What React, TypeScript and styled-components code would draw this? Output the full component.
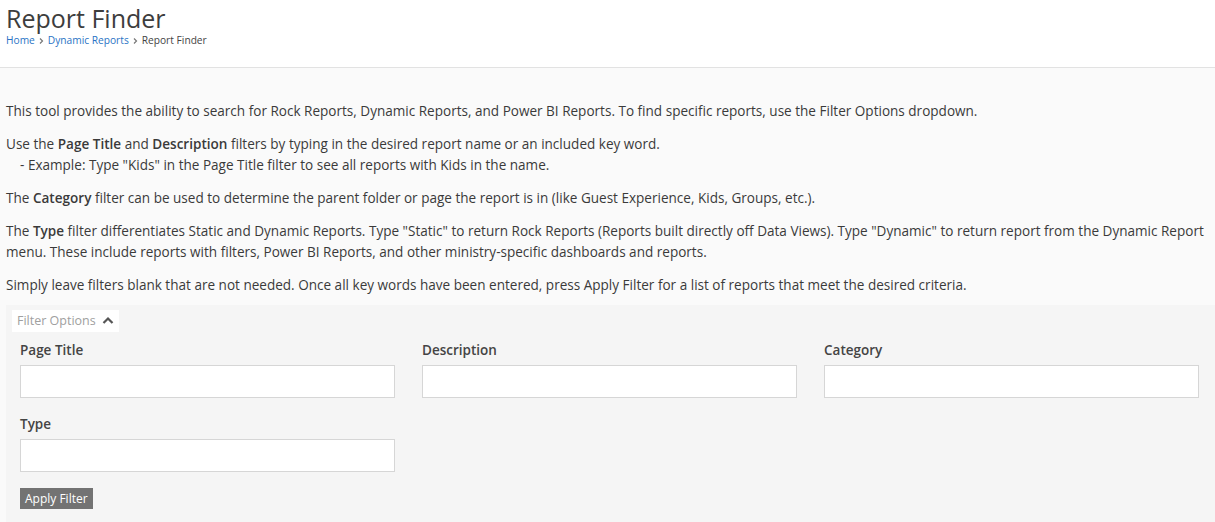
import styled, { createGlobalStyle } from 'styled-components';

const GlobalStyle = createGlobalStyle`
  html, body {
    margin: 0;
    padding: 0;
    background: #fafafa;
    font-family: "Open Sans", "Noto Sans", sans-serif;
    color: #3a3a3a;
  }
  * { box-sizing: border-box; }
`

const Header = styled.header`
  background: #fff;
  border-bottom: 1px solid #e2e2e2;
  height: 68px;
  padding: 3px 6px 0;
`

const Title = styled.h1`
  margin: 0;
  font-size: 25px;
  font-weight: 400;
  line-height: 30px;
  color: #3d3d3d;
`

const Crumbs = styled.nav`
  display: flex;
  align-items: center;
  gap: 3px;
  font-size: 10.2px;
  line-height: 15px;
`

const Crumb = styled.a<{ $active?: boolean }>`
  color: ${p => (p.$active ? '#444' : '#2a73c5')};
  text-decoration: none;
`

const Sep = styled.span`
  display: inline-flex;
  color: #777;
`

const Main = styled.main`
  padding: 33px 0 0 6px;
`

const Para = styled.p`
  margin: 0 0 12px;
  font-size: 13.55px;
  line-height: 21px;
  b { font-weight: 600; }
  &:last-of-type { margin-bottom: 9px; }
`

const Indent = styled.span`
  padding-left: 14px;
`

const Panel = styled.section`
  background: #f5f5f5;
  padding: 3px 16px 13px 6px;
`

const Toggle = styled.button`
  display: inline-flex;
  align-items: center;
  gap: 6px;
  background: #fff;
  border: none;
  font: inherit;
  font-size: 12.5px;
  color: #a0a0a0;
  height: 22px;
  padding: 0 5px;
  cursor: pointer;
`

const Form = styled.div`
  padding: 8px 0 0 8px;
`

const Grid = styled.div`
  display: grid;
  grid-template-columns: repeat(3, 375px);
  column-gap: 27px;
  row-gap: 16px;
`

const Field = styled.label`
  display: flex;
  flex-direction: column;
`

const Label = styled.span`
  font-size: 13.5px;
  font-weight: 600;
  color: #444;
  line-height: 20px;
  margin-bottom: 5px;
`

const Input = styled.input`
  height: 33px;
  border: 1px solid #d6d6d6;
  background: #fff;
  font: inherit;
`

const Button = styled.button`
  margin-top: 16px;
  background: #737373;
  color: #fff;
  border: none;
  font: inherit;
  font-size: 12px;
  height: 21px;
  padding: 0 5px;
  cursor: pointer;
`

const Up = styled.span`
  display: inline-flex;
  color: #555;
`

const fields = ['Page Title', 'Description', 'Category', 'Type'];

function Chevron() {
  return (
    <svg width="7" height="8" viewBox="0 0 7 8">
      <path d="M2 1.5 L4.5 4 L2 6.5" fill="none" stroke="currentColor" strokeWidth="1.2" />
    </svg>
  )
}

export default function App() {
  return (
    <>
      <GlobalStyle />
      <Header>
        <Title>Report Finder</Title>
        <Crumbs>
          <Crumb href="#">Home</Crumb>
          <Sep><Chevron /></Sep>
          <Crumb href="#">Dynamic Reports</Crumb>
          <Sep><Chevron /></Sep>
          <Crumb $active>Report Finder</Crumb>
        </Crumbs>
      </Header>
      <Main>
        <Para>
          This tool provides the ability to search for Rock Reports, Dynamic Reports, and Power BI Reports. To find specific reports, use the Filter Options dropdown.
        </Para>
        <Para>
          Use the <b>Page Title</b> and <b>Description</b> filters by typing in the desired report name or an included key word.
          <br />
          <Indent>- Example: Type "Kids" in the Page Title filter to see all reports with Kids in the name.</Indent>
        </Para>
        <Para>
          The <b>Category</b> filter can be used to determine the parent folder or page the report is in (like Guest Experience, Kids, Groups, etc.).
        </Para>
        <Para>
          The <b>Type</b> filter differentiates Static and Dynamic Reports. Type "Static" to return Rock Reports (Reports built directly off Data Views). Type "Dynamic" to return report from the Dynamic Report menu. These include reports with filters, Power BI Reports, and other ministry-specific dashboards and reports.
        </Para>
        <Para>
          Simply leave filters blank that are not needed. Once all key words have been entered, press Apply Filter for a list of reports that meet the desired criteria.
        </Para>
        <Panel>
          <Toggle>
            Filter Options
            <Up>
              <svg width="12" height="9" viewBox="0 0 12 9">
                <path d="M1.5 7 L6 2.5 L10.5 7" fill="none" stroke="currentColor" strokeWidth="2.2" />
              </svg>
            </Up>
          </Toggle>
          <Form>
            <Grid>
              {fields.map(f => (
                <Field key={f}>
                  <Label>{f}</Label>
                  <Input type="text" />
                </Field>
              ))}
            </Grid>
            <Button>Apply Filter</Button>
          </Form>
        </Panel>
      </Main>
    </>
  );
}
